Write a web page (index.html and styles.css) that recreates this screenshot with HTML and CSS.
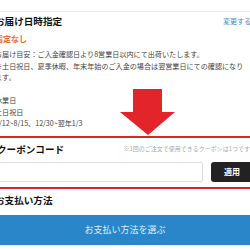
FILE: index.html
```html
<!DOCTYPE html>
<html lang="ja">
<head>
    <meta charset="UTF-8">
    <meta name="viewport" content="width=device-width, initial-scale=1.0">
    <title>ご注文手続き</title>

    <link rel="stylesheet" href="styles.css">
</head>
<body>
    <div class="page">
        <div class="section delivery">
            <div class="section-head">
                <h2>お届け日時指定</h2>
                <a class="change-link" href="#">変更する</a>
            </div>
            <p class="selected">指定なし</p>
            <div class="notes">
                <p>お届け目安：ご入金確認日より8営業日以内にて出荷いたします。</p>
                <p>※土日祝日、夏季休暇、年末年始のご入金の場合は翌営業日にての確認になります。</p>
                <p class="spacer">&nbsp;</p>
                <p>休業日</p>
                <p>土日祝日</p>
                <p>8/12~8/15、12/30~翌年1/3</p>
            </div>
        </div>

        <div class="section coupon">
            <div class="section-head">
                <h2>クーポンコード</h2>
                <span class="coupon-note">※1回のご注文で使用できるクーポンは1つです</span>
            </div>
            <div class="coupon-form">
                <input type="text" class="coupon-input">
                <button class="apply-btn">適用</button>
            </div>
        </div>

        <div class="section payment">
            <h2>お支払い方法</h2>
            <button class="pay-btn">お支払い方法を選ぶ</button>
        </div>

        <!-- annotation arrow pointing at the coupon box -->
        <svg class="arrow" width="56" height="47" viewBox="0 0 56 47">
            <polygon points="13,0 42,0 42,23 55,23 28,46 0,23 13,23" fill="#e3242b"/>
        </svg>
    </div>
</body>
</html>
```

FILE: styles.css
```css
* {
    box-sizing: border-box;
    font-family: "Noto Sans CJK JP", "Noto Sans", sans-serif;
}

body {
    margin: 0;
    overflow: hidden;
    background-color: #fff;
}

.page {
    position: relative;
    width: 260px;
    margin-left: -5px;
    padding-top: 11px;
}

p {
    margin: 0;
}

h2 {
    margin: 0;
    font-size: 9.6px;
    line-height: 18px;
    font-weight: bold;
    color: #111;
}

.section-head {
    display: flex;
    justify-content: space-between;
    align-items: center;
}

.delivery {
    border-top: 1px solid #ebebeb;
    padding-bottom: 6px;
}

.change-link {
    font-size: 7px;
    color: #4a8cc4;
    text-decoration: none;
    margin-right: 4px;
}

.selected {
    margin-top: 3px;
    font-size: 8px;
    line-height: 12px;
    font-weight: bold;
    color: #ec6a2c;
}

.notes {
    margin-top: 4px;
    margin-right: 7px;
    font-size: 7.1px;
    line-height: 11.5px;
    color: #444;
}

.coupon {
    border: 2px solid #d8262c;
    margin: 0 -12px;
    padding: 2px 12px 5px 12px;
}

.coupon-note {
    font-size: 6px;
    color: #aaa;
    margin-right: 3px;
}

.coupon-form {
    display: flex;
    gap: 8px;
    margin-top: 4px;
}

.coupon-input {
    flex: 1;
    height: 20px;
    border: 1px solid #ddd;
    border-radius: 2px;
    background-color: #fff;
}

.apply-btn {
    width: 42px;
    height: 20px;
    border: none;
    border-radius: 3px;
    background-color: #222;
    color: #fff;
    font-size: 8px;
    font-weight: bold;
}

.payment {
    padding-top: 2px;
}

.pay-btn {
    display: block;
    width: 100%;
    height: 30px;
    margin-top: 6px;
    border: none;
    background-color: #2a86c8;
    color: #dcebf7;
    font-size: 9px;
}

.arrow {
    position: absolute;
    left: 125px;
    top: 89px;
}
```
